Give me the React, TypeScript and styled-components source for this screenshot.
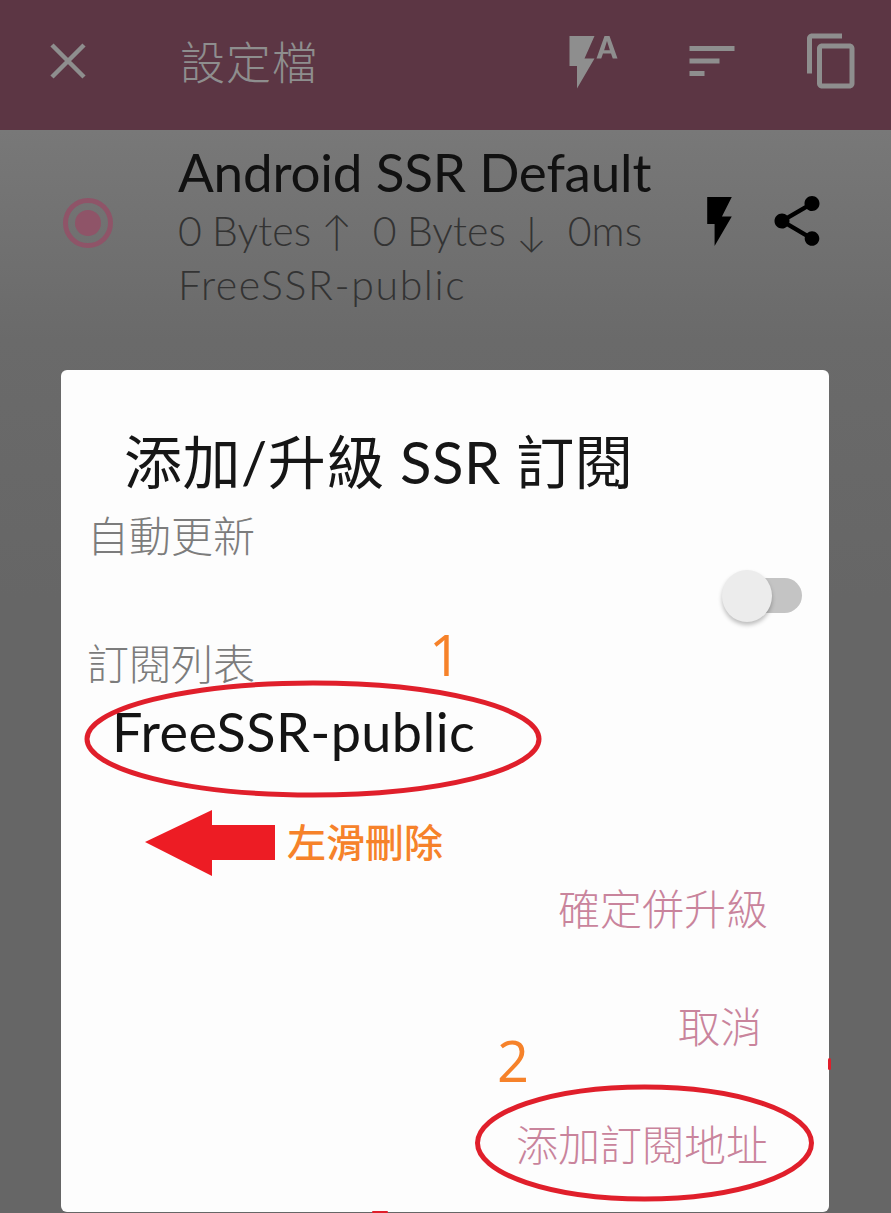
import React from "react";
import styled, { createGlobalStyle } from "styled-components";

const GlobalStyle = createGlobalStyle`
  html, body {
    margin: 0;
    padding: 0;
    background: #666666;
  }
  * {
    box-sizing: border-box;
  }
`;

const FONT = `"Lato", "Noto Sans CJK TC", sans-serif`;
const CJK = `"Noto Sans CJK TC", "Noto Sans", sans-serif`;

const Page = styled.div`
  position: relative;
  width: 891px;
  height: 1213px;
  overflow: hidden;
  background: linear-gradient(to bottom, #787878 130px, #6a6a6a 340px, #666666 600px);
  font-family: ${FONT};
`;

const Toolbar = styled.header`
  display: flex;
  align-items: center;
  height: 130px;
  padding: 0 29px 9px 45px;
  background: #5c3644;
  color: #8e8e8e;
`;

const ToolbarTitle = styled.h1`
  margin: 0 0 0 89px;
  flex: 1;
  font-family: ${CJK};
  font-size: 45px;
  font-weight: 300;
  color: #8e8e8e;
  letter-spacing: 1px;
`;

const ToolbarActions = styled.div`
  display: flex;
  align-items: center;
  gap: 60px;
`;

const ProfileRow = styled.section`
  display: flex;
  align-items: center;
  height: 215px;
  padding: 0 64px 0 63px;
`;

const Radio = styled.span`
  flex: none;
  display: flex;
  align-items: center;
  justify-content: center;
  width: 50px;
  height: 50px;
  margin-bottom: 30px;
  border: 5px solid #8f5468;
  border-radius: 50%;

  &::after {
    content: "";
    width: 26px;
    height: 26px;
    border-radius: 50%;
    background: #8f5468;
  }
`;

const ProfileText = styled.div`
  flex: 1;
  display: flex;
  flex-direction: column;
  margin-left: 65px;
  margin-top: -21px;
`;

const ProfileName = styled.div`
  margin-bottom: 2px;
  font-size: 53px;
  line-height: 60px;
  color: #111111;
  letter-spacing: -0.2px;
  white-space: nowrap;
`;

const ProfileStat = styled.div<{ $wordSpacing?: number; $letterSpacing: number }>`
  font-size: 41px;
  line-height: 54px;
  font-weight: 300;
  color: #333333;
  white-space: pre;
  letter-spacing: ${(p) => p.$letterSpacing}px;
  word-spacing: ${(p) => p.$wordSpacing ?? 0}px;
`;

const ProfileActions = styled.div`
  display: flex;
  align-items: center;
  gap: 18px;
  margin-bottom: 33px;
  color: #000000;
`;

const Dialog = styled.div`
  position: absolute;
  left: 61px;
  top: 370px;
  width: 768px;
  height: 842px;
  display: flex;
  flex-direction: column;
  padding: 56px 28px 0;
  background: #fdfdfd;
  border-radius: 6px;
`;

const DialogTitle = styled.h2`
  margin: 0 0 0 35px;
  font-family: ${FONT};
  font-size: 58px;
  line-height: 72px;
  font-weight: 400;
  color: #161616;
  letter-spacing: 0.5px;
  white-space: nowrap;
`;

const FieldLabel = styled.div<{ $gap?: number }>`
  margin: ${(p) => p.$gap ?? 0}px 0 0 -2px;
  font-family: ${CJK};
  font-size: 42px;
  line-height: 58px;
  font-weight: 300;
  color: #7c7c7c;
`;

const SwitchRow = styled.div`
  display: flex;
  justify-content: flex-end;
  height: 70px;
  padding-top: 9px;
  margin-right: -1px;
`;

const SwitchTrack = styled.span`
  position: relative;
  display: block;
  width: 70px;
  height: 35px;
  margin-top: 6px;
  border-radius: 18px;
  background: #c4c4c4;
`;

const SwitchThumb = styled.span`
  position: absolute;
  left: -10px;
  top: -8px;
  width: 50px;
  height: 52px;
  border-radius: 50%;
  background: #ececec;
  box-shadow: 0 3px 4px rgba(0, 0, 0, 0.25);
`;

const ListSection = styled.div`
  height: 185px;
  padding: 11px 0 0 23px;
`;

const ListItem = styled.div`
  font-size: 54px;
  line-height: 60px;
  color: #141414;
  letter-spacing: 0.4px;
`;

const Actions = styled.div`
  display: flex;
  flex-direction: column;
  align-items: flex-end;
`;

const ActionButton = styled.div<{ $height: number; $inset: number }>`
  display: flex;
  align-items: center;
  height: ${(p) => p.$height}px;
  padding-right: ${(p) => p.$inset}px;
  font-family: ${CJK};
  font-size: 42px;
  font-weight: 300;
  color: #c9849c;
`;

const Ring = styled.svg`
  position: absolute;
  overflow: visible;
`;

const StepNumber = styled.span<{ $x: number; $y: number }>`
  position: absolute;
  left: ${(p) => p.$x}px;
  top: ${(p) => p.$y}px;
  font-family: "Open Sans", sans-serif;
  font-size: 56px;
  line-height: 62px;
  font-weight: 500;
  color: #f6822a;
`;

const SwipeArrow = styled.svg`
  position: absolute;
  left: 145px;
  top: 810px;
`;

const SwipeHint = styled.span`
  position: absolute;
  left: 287px;
  top: 817px;
  font-family: ${CJK};
  font-size: 39px;
  line-height: 46px;
  font-weight: 500;
  color: #f6822a;
`;

const RedSpeck = styled.span<{ $x: number; $y: number; $w: number; $h: number }>`
  position: absolute;
  left: ${(p) => p.$x}px;
  top: ${(p) => p.$y}px;
  width: ${(p) => p.$w}px;
  height: ${(p) => p.$h}px;
  border-radius: 2px;
  background: #e01f2b;
`;

const CloseIcon = () => (
  <svg width="46" height="46" viewBox="0 0 46 46" fill="none" stroke="currentColor" strokeWidth="4.5">
    <path d="M7 7 L39 39 M39 7 L7 39" />
  </svg>
);

const FlashAutoIcon = () => (
  <svg width="60" height="60" viewBox="0 0 24 24" fill="currentColor">
    <path d="M3 2v12h3v9l7-12H9l4-9H3zm16 0h-2l-3.2 9h1.9l.7-2h3.2l.7 2h1.9L19 2zm-2.15 5.65L18 4l1.15 3.65h-2.3z" />
  </svg>
);

const SortIcon = () => (
  <svg width="60" height="60" viewBox="0 0 24 24" fill="currentColor">
    <path d="M3 18h6v-2H3v2zM3 6v2h18V6H3zm0 7h12v-2H3v2z" />
  </svg>
);

const CopyIcon = () => (
  <svg width="60" height="60" viewBox="0 0 24 24" fill="currentColor">
    <path d="M16 1H4c-1.1 0-2 .9-2 2v14h2V3h12V1zm3 4H8c-1.1 0-2 .9-2 2v14c0 1.1.9 2 2 2h11c1.1 0 2-.9 2-2V7c0-1.1-.9-2-2-2zm0 16H8V7h11v14z" />
  </svg>
);

const FlashIcon = () => (
  <svg width="59" height="59" viewBox="0 0 24 24" fill="currentColor">
    <path d="M7 2v11h3v9l7-12h-4l4-8z" />
  </svg>
);

const ShareIcon = () => (
  <svg width="60" height="60" viewBox="0 0 24 24" fill="currentColor">
    <path d="M18 16.08c-.76 0-1.44.3-1.96.77L8.91 12.7c.05-.23.09-.46.09-.7s-.04-.47-.09-.7l7.05-4.11c.54.5 1.25.81 2.04.81 1.66 0 3-1.34 3-3s-1.34-3-3-3-3 1.34-3 3c0 .24.04.47.09.7L8.04 9.81C7.5 9.31 6.79 9 6 9c-1.66 0-3 1.34-3 3s1.34 3 3 3c.79 0 1.5-.31 2.04-.81l7.12 4.16c-.05.21-.08.43-.08.65 0 1.61 1.31 2.92 2.92 2.92 1.61 0 2.92-1.31 2.92-2.92s-1.31-2.92-2.92-2.92z" />
  </svg>
);

const App = () => {
  return (
    <Page>
      <GlobalStyle />
      <Toolbar>
        <CloseIcon />
        <ToolbarTitle>設定檔</ToolbarTitle>
        <ToolbarActions>
          <FlashAutoIcon />
          <SortIcon />
          <CopyIcon />
        </ToolbarActions>
      </Toolbar>

      <ProfileRow>
        <Radio />
        <ProfileText>
          <ProfileName>Android SSR Default</ProfileName>
          <ProfileStat $letterSpacing={0.1} $wordSpacing={-1}>0 Bytes ↑  0 Bytes ↓  0ms</ProfileStat>
          <ProfileStat $letterSpacing={1.6}>FreeSSR-public</ProfileStat>
        </ProfileText>
        <ProfileActions>
          <FlashIcon />
          <ShareIcon />
        </ProfileActions>
      </ProfileRow>

      <Dialog>
        <DialogTitle>添加/升級 SSR 訂閱</DialogTitle>
        <FieldLabel $gap={7}>自動更新</FieldLabel>
        <SwitchRow>
          <SwitchTrack>
            <SwitchThumb />
          </SwitchTrack>
        </SwitchRow>
        <FieldLabel>訂閱列表</FieldLabel>
        <ListSection>
          <ListItem>FreeSSR-public</ListItem>
        </ListSection>
        <Actions>
          <ActionButton $height={60} $inset={33}>確定併升級</ActionButton>
          <ActionButton $height={176} $inset={39}>取消</ActionButton>
          <ActionButton $height={60} $inset={33}>添加訂閱地址</ActionButton>
        </Actions>
      </Dialog>

      <Ring width="460" height="120" viewBox="0 0 460 120" style={{ left: 83, top: 679 }}>
        <ellipse cx="230" cy="60" rx="226" ry="56" fill="none" stroke="#e01f2b" strokeWidth="5" />
      </Ring>
      <Ring width="342" height="120" viewBox="0 0 342 120" style={{ left: 474, top: 1084 }}>
        <ellipse cx="170.5" cy="59" rx="167" ry="56" fill="none" stroke="#e01f2b" strokeWidth="5" />
      </Ring>
      <StepNumber $x={429} $y={623}>1</StepNumber>
      <StepNumber $x={497} $y={1029}>2</StepNumber>
      <SwipeArrow width="130" height="66" viewBox="0 0 130 66">
        <path d="M0 32 L67 0 V15 H130 V50 H67 V66 Z" fill="#ed1c24" />
      </SwipeArrow>
      <SwipeHint>左滑刪除</SwipeHint>
      <RedSpeck $x={828} $y={1058} $w={3} $h={12} />
      <RedSpeck $x={372} $y={1211} $w={16} $h={2} />
    </Page>
  );
};

export default App;
